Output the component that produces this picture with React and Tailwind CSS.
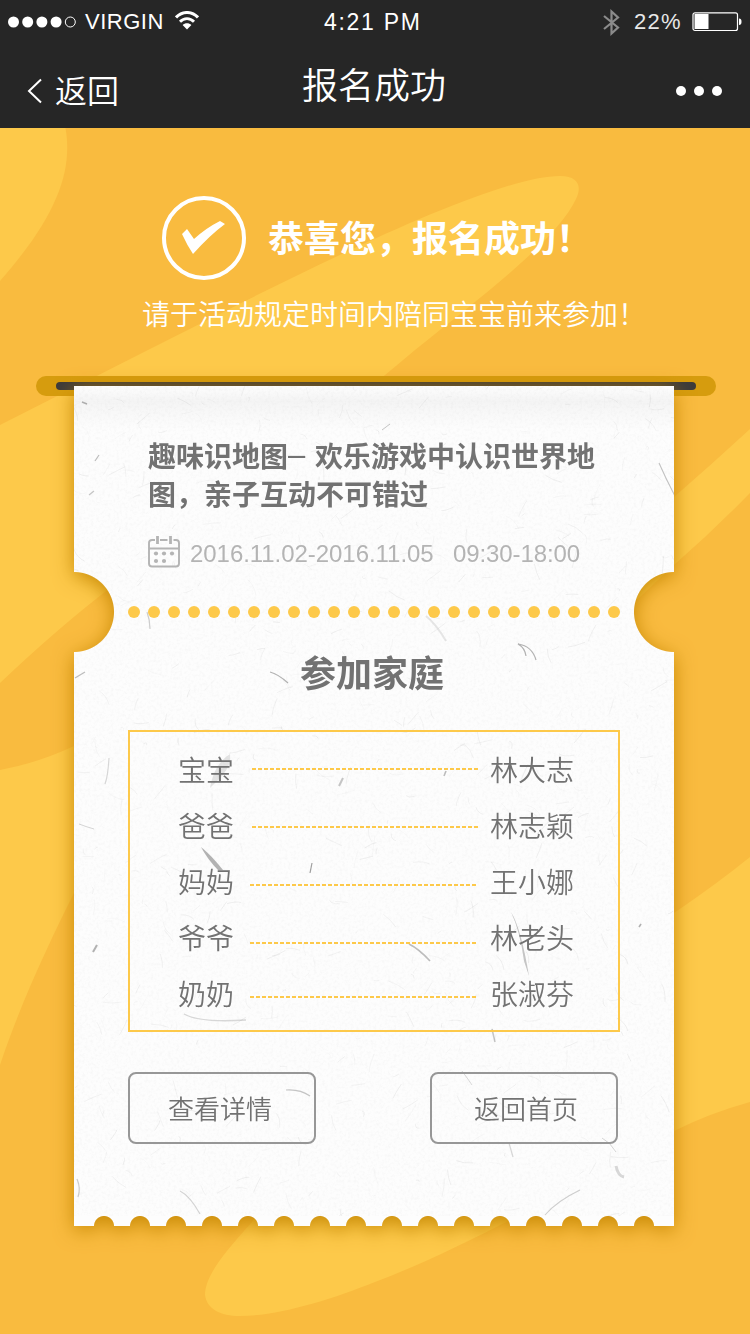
import React from "react";

const family = [
  { role: "宝宝", name: "林大志", leader: "ml-[18px] -mt-px" },
  { role: "爸爸", name: "林志颖", leader: "ml-[18px] mt-[3px]" },
  { role: "妈妈", name: "王小娜", leader: "ml-4 mt-[7px]" },
  { role: "爷爷", name: "林老头", leader: "ml-4 mt-[11px]" },
  { role: "奶奶", name: "张淑芬", leader: "ml-4 mt-[7px]" },
];

function makeFibers(count) {
  let seed = 7;
  const next = () => {
    seed = (seed * 16807) % 2147483647;
    return seed / 2147483647;
  };
  return Array.from({ length: count }, () => {
    const x = next() * 600;
    const y = next() * 840;
    const a = next() * Math.PI * 2;
    const l = 3 + next() * 16;
    const bend = (next() - 0.5) * 6;
    const dx = Math.cos(a) * l;
    const dy = Math.sin(a) * l;
    return {
      d: `M${x.toFixed(1)} ${y.toFixed(1)}q${(dx / 2 + bend).toFixed(1)} ${(dy / 2 - bend).toFixed(1)} ${dx.toFixed(1)} ${dy.toFixed(1)}`,
      o: 0.03 + next() * 0.07,
    };
  });
}

const fibers = makeFibers(700);

const strands = [
  ["M8 16l5 2", 1.4, 0.4],
  ["M21 75l4-6", 1.2, 0.35],
  ["M15 109l5-4", 1.2, 0.3],
  ["M73 226q3 8 3 17", 1.2, 0.25],
  ["M196 286q8 2 18 11", 1.2, 0.4],
  ["M1 292l10-6", 1.2, 0.35],
  ["M35 372q-1 18-4 26", 1.2, 0.2],
  ["M5 438q8 3 15 5", 1, 0.22],
  ["M19 566l4-7", 2, 0.4],
  ["M444 258q14 2 18 16m-18-16q7 4 8 12", 1.2, 0.4],
  ["M585 77q7 16 16 33", 1.1, 0.32],
  ["M352 230q10 8 20 25", 2, 0.12],
  ["M308 44l8-6", 1, 0.3],
  ["M265 400l4-8", 2, 0.3],
  ["M236 487l2-10", 1.2, 0.5],
  ["M335 558q10 5 21 17", 1.6, 0.35],
  ["M110 628q16 9 62 6", 1.3, 0.2],
  ["M418 643l3 13", 1.5, 0.3],
  ["M212 704q14-1 24 6", 1.2, 0.3],
  ["M106 805q10 5 20 23", 1.2, 0.22],
  ["M471 829q12-14 35-25", 1.1, 0.25],
  ["M542 780q2 10 8 11", 3, 0.2],
  ["M3 793q4 9 1 18", 1.2, 0.25],
  ["M388 685q6 8 10 14", 1, 0.2],
  ["M435 757l4 14", 1.2, 0.2],
  ["M565 541l2-3", 1.6, 0.4],
  ["M370 390l2-5", 1.6, 0.35],
  ["M528 752q8 4 14 14", 1, 0.22],
];

const smudges = [
  ["M127 461Q138 470 149 484L144 484Q134 474 127 461Z", 0.4],
  ["M437 526Q447 542 455 590L450 575Q446 545 437 526Z", 0.3],
  ["M136 402Q140 378 156 368Q158 378 148 390Q142 396 136 402Z", 0.14],
];

function Backdrop() {
  return (
    <svg className="absolute inset-0 h-full w-full" viewBox="0 128 750 1206" aria-hidden="true">
      <g fill="#fdc94a">
        <path d="M0 128H65.500C73 171 57 216 0 281Z" />
        <path d="M0 425L146 351C290 278 490 176 560 176C579 176 582 187 576 199C557 239 490 290 415 350C310 440 150 550 114 585Q60 626 0 683Z" />
        <path d="M750 429Q712 464 674 497L600 560L590 640L640 597L674 565Q714 530 750 493Z" />
        <path d="M0 770Q38 763 74 746L150 710V740L74 893C48 945 20 1005 0 1065Z" />
        <path d="M750 857Q718 883 674 913C520 1010 290 1170 252 1222C222 1255 205 1277 205 1295C207 1309 220 1316 240 1316C278 1316 330 1300 375 1282C420 1265 465 1243 508 1221C570 1190 640 1150 674 1131Q710 1113 750 1102Z" />
      </g>
    </svg>
  );
}

function StatusBar() {
  return (
    <div className="flex h-11 items-center pl-2 pr-2 font-['Liberation_Sans',Arial,sans-serif] text-[23px] leading-none">
      <div className="flex w-[316px] items-center">
        <svg width="70" height="12" viewBox="0 0 70 12" fill="#fff">
          <circle cx="5.500" cy="6" r="5.500" />
          <circle cx="19.700" cy="6" r="5.500" />
          <circle cx="33.900" cy="6" r="5.500" />
          <circle cx="48.100" cy="6" r="5.500" />
          <circle cx="62.300" cy="6" r="5" fill="none" stroke="#fff" />
        </svg>
        <span className="ml-[7px] w-[82px] text-[22px] tracking-[0.5px]">VIRGIN</span>
        <svg className="ml-2 -mt-1" width="24" height="19" viewBox="0 0 24 19" fill="none" stroke="#fff">
          <path d="M1 6.500C7-.2 17-.2 23 6.500" strokeWidth="3" />
          <path d="M5 10.800C9 6.500 15 6.500 19 10.800" strokeWidth="2.800" />
          <path d="M12 18.500L7.600 14C10 11.700 14 11.700 16.400 14Z" fill="#fff" stroke="none" />
        </svg>
      </div>
      <span className="w-[110px] whitespace-nowrap tracking-[1.7px]">4:21 PM</span>
      <div className="ml-auto flex items-center">
        <svg width="17" height="27" viewBox="0 0 17 27" fill="none" stroke="#8b8b8b" strokeWidth="2.200">
          <path d="M1 7L15 18.500L8.500 24.500V2.500L15 8.500L1 20" />
        </svg>
        <span className="ml-[14px] w-[58px] text-[22px] tracking-[1.3px] text-[#e8e8e8]">22%</span>
        <svg width="50" height="20" viewBox="0 0 50 20">
          <rect x="1" y=".8" width="44.500" height="17.700" rx="2" fill="none" stroke="#fff" strokeWidth="1.200" />
          <rect x="2" y="2" width="2" height="15" fill="#8b8b8b" />
          <rect x="3" y="2" width="13.500" height="15" fill="#fff" />
          <path d="M47 6.500Q49.500 6.500 49.500 9.700T47 13Z" fill="#fff" />
        </svg>
      </div>
    </div>
  );
}

function NavBar() {
  return (
    <div className="grid h-[84px] grid-cols-[200px_1fr_200px] font-[350]">
      <button className="flex h-[94px] items-center pl-[27px] text-[32px] leading-none">
        <svg width="16" height="26" viewBox="0 0 16 26" fill="none" stroke="#fff" strokeWidth="2">
          <path d="M14 1.500L2 13L14 24.500" />
        </svg>
        <span className="-mt-1 ml-3">返回</span>
      </button>
      <h1 className="-ml-0.5 pt-[21px] text-center text-[36px] leading-[36px]">报名成功</h1>
      <div className="flex h-[94px] items-center justify-end gap-2 pr-7">
        <i className="size-2.5 rounded-full bg-white" />
        <i className="size-2.5 rounded-full bg-white" />
        <i className="size-2.5 rounded-full bg-white" />
      </div>
    </div>
  );
}

function CalendarIcon() {
  return (
    <svg className="-mt-1.5" width="32" height="33" viewBox="0 0 32 33" fill="none" stroke="#b4b4b4" strokeWidth="1.900">
      <path d="M7 5H4Q1 5 1 8V28.500Q1 31.500 4 31.500H28Q31 31.500 31 28.500V8Q31 5 28 5H25.500M12 5H19.500M1 13.500H31" />
      <path d="M9.500 1V9M22.500 1V9" strokeWidth="2.800" />
      <g fill="#b4b4b4" stroke="none">
        <circle cx="8" cy="18.500" r="2.100" />
        <circle cx="16" cy="18.500" r="2.100" />
        <circle cx="24" cy="18.500" r="2.100" />
        <circle cx="8" cy="26" r="2.100" />
        <circle cx="16" cy="26" r="2.100" />
      </g>
    </svg>
  );
}

function PaperTexture() {
  return (
    <svg className="absolute inset-x-0 top-0 h-[840px] w-[600px]" viewBox="0 0 600 840" fill="none" stroke="#444" aria-hidden="true">
      <filter id="grain" x="0" y="0" width="100%" height="100%">
        <feTurbulence type="fractalNoise" baseFrequency="0.35" numOctaves="3" seed="4" />
        <feColorMatrix values="0 0 0 0 0.4  0 0 0 0 0.4  0 0 0 0 0.4  0.5 0 0 0 -0.21" />
      </filter>
      <rect width="600" height="840" stroke="none" filter="url(#grain)" opacity="0.3" />
      {fibers.map((f, i) => (
        <path key={i} d={f.d} strokeWidth="0.800" strokeOpacity={f.o} />
      ))}
      {strands.map(([d, w, o]) => (
        <path key={d} d={d} strokeWidth={w} strokeOpacity={o} />
      ))}
      {smudges.map(([d, o]) => (
        <path key={d} d={d} fill="#444" fillOpacity={o} stroke="none" />
      ))}
    </svg>
  );
}

function Ticket() {
  return (
    <article className="relative -mt-[10px] ml-[74px] w-[600px] text-[#727272] [filter:drop-shadow(0_4px_10px_rgba(196,134,0,0.95))]">
      <div className="relative h-[830px] overflow-hidden bg-[#fdfdfd] [mask-composite:intersect] [mask-image:radial-gradient(circle_at_0_226px,transparent_39.5px,#000_40.5px),radial-gradient(circle_at_600px_226px,transparent_39.5px,#000_40.5px)]">
        <PaperTexture />
        <div className="absolute inset-x-0 top-0 h-11 bg-[linear-gradient(rgba(0,0,0,0),rgba(0,0,0,0.035)_35%,rgba(0,0,0,0.02)_60%,rgba(0,0,0,0))]" />
        <div className="relative px-[54px] pt-[50px]">
          <h2 className="pl-5 text-[28px] font-bold leading-[38px]">
            趣味识地图<span className="relative -top-0.5 inline-block w-[27px] font-['Liberation_Sans',Arial,sans-serif] text-[31px] font-normal leading-none">–</span>欢乐游戏中认识世界地
            <br />
            图，亲子互动不可错过
          </h2>
          <div className="mt-[25px] flex h-[34px] items-center pl-5 font-['Liberation_Sans',Arial,sans-serif] text-[24px] leading-[34px] text-[#b4b4b4]">
            <CalendarIcon />
            <time className="ml-2.5 w-[263px] tracking-[-0.050px]">2016.11.02-2016.11.05</time>
            <time className="tracking-[-0.100px]">09:30-18:00</time>
          </div>
          <div className="mt-[35px] flex justify-between">
            {Array.from({ length: 25 }, (_, i) => (
              <i key={i} className="size-3 rounded-full bg-[#fdc94a]" />
            ))}
          </div>
          <h3 className="-ml-1 mt-[33px] text-center text-[36px] font-bold leading-[40px]">参加家庭</h3>
          <ul className="mt-[39px] h-[302px] border-2 border-[#fdc94a] pl-12 pt-[9px]">
            {family.map((m) => (
              <li key={m.role} className="flex h-14 w-[396px] items-center text-[28px] leading-none">
                <span className="w-14 font-[350]">{m.role}</span>
                <i className={`h-0.5 w-[226px] bg-[repeating-linear-gradient(90deg,#fdc94a_0_4px,transparent_4px_6px)] ${m.leader}`} />
                <span className="ml-auto font-[350]">{m.name}</span>
              </li>
            ))}
          </ul>
          <div className="mt-10 flex w-[490px] justify-between text-[26px] font-[350]">
            <button className="h-[72px] w-[188px] rounded-lg border-2 border-[#979797] pb-0.5 pr-1">查看详情</button>
            <button className="h-[72px] w-[188px] rounded-lg border-2 border-[#979797] pb-0.5 pl-1">返回首页</button>
          </div>
        </div>
      </div>
      <div className="flex h-[10px]">
        <div className="w-3 bg-[#fdfdfd]" />
        <div className="flex-1 bg-[#fdfdfd] [mask-image:radial-gradient(circle_at_18px_10px,transparent_9.5px,#000_10.5px)] [mask-size:36px_10px]" />
        <div className="w-3 bg-[#fdfdfd]" />
      </div>
    </article>
  );
}

export default function App() {
  return (
    <div className="flex h-[1334px] w-[750px] flex-col overflow-hidden bg-[#f9bb3f] font-['Noto_Sans_CJK_SC',sans-serif]">
      <header className="h-32 bg-[#262626] text-white">
        <StatusBar />
        <NavBar />
      </header>
      <main className="relative flex-1 overflow-hidden">
        <Backdrop />
        <section className="relative h-[248px] pt-[68px] text-white">
          <div className="flex items-center pl-[162px]">
            <svg width="84" height="84" viewBox="0 0 84 84">
              <circle cx="42" cy="42" r="40" fill="none" stroke="#fff" strokeWidth="4" />
              <path d="M20 38L25 33L32 43Q44 32 58 25L63 28Q48 39 31 58Q25 49 20 38Z" fill="#fff" />
            </svg>
            <p className="-mt-1 ml-[22px] text-[36px] font-bold leading-[40px]">恭喜您，报名成功！</p>
          </div>
          <p className="pl-[142px] pt-[13px] text-[28px] font-[350] leading-[40px]">请于活动规定时间内陪同宝宝前来参加！</p>
        </section>
        <div className="relative ml-9 flex h-5 w-[680px] items-center rounded-full bg-[#d69c0e] px-5">
          <i className="h-2 flex-1 rounded-full bg-[#3c3b3b]" />
        </div>
        <Ticket />
      </main>
    </div>
  );
}
